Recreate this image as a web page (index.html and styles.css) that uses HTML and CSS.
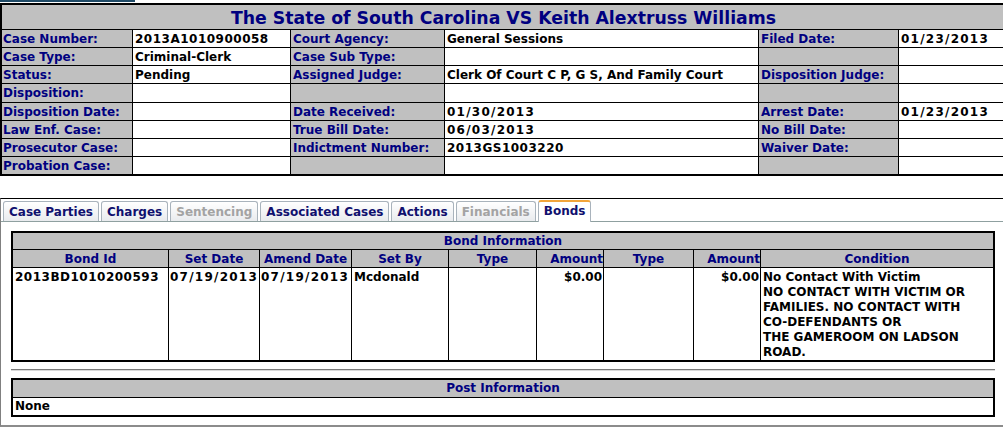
FILE: index.html
```html
<!DOCTYPE html>
<html>
<head>
<meta charset="utf-8">
<title>Case Details</title>
<link rel="stylesheet" href="styles.css">
</head>
<body>
<div class="topbar"></div>
<div class="case-head">
  <div class="title">The State of South Carolina VS Keith Alextruss Williams</div>

  <div class="lbl first">Case Number:</div><div class="val n">2013A1010900058</div>
  <div class="lbl">Court Agency:</div><div class="val">General Sessions</div>
  <div class="lbl">Filed Date:</div><div class="val d">01/23/2013</div>

  <div class="lbl first">Case Type:</div><div class="val">Criminal-Clerk</div>
  <div class="lbl">Case Sub Type:</div><div class="val"></div>
  <div class="lbl"></div><div class="val"></div>

  <div class="lbl first">Status:</div><div class="val">Pending</div>
  <div class="lbl">Assigned Judge:</div><div class="val">Clerk Of Court C P, G S, And Family Court</div>
  <div class="lbl">Disposition Judge:</div><div class="val"></div>

  <div class="lbl first">Disposition:</div><div class="val"></div>
  <div class="lbl"></div><div class="val"></div>
  <div class="lbl"></div><div class="val"></div>

  <div class="lbl first">Disposition Date:</div><div class="val"></div>
  <div class="lbl">Date Received:</div><div class="val d">01/30/2013</div>
  <div class="lbl">Arrest Date:</div><div class="val d">01/23/2013</div>

  <div class="lbl first">Law Enf. Case:</div><div class="val"></div>
  <div class="lbl">True Bill Date:</div><div class="val d">06/03/2013</div>
  <div class="lbl">No Bill Date:</div><div class="val"></div>

  <div class="lbl first">Prosecutor Case:</div><div class="val"></div>
  <div class="lbl">Indictment Number:</div><div class="val n">2013GS1003220</div>
  <div class="lbl">Waiver Date:</div><div class="val"></div>

  <div class="lbl first">Probation Case:</div><div class="val"></div>
  <div class="lbl"></div><div class="val"></div>
  <div class="lbl"></div><div class="val"></div>
</div>

<div class="tabpanel">
  <div class="tabs">
    <span class="tab">Case Parties</span>
    <span class="tab">Charges</span>
    <span class="tab disabled">Sentencing</span>
    <span class="tab">Associated Cases</span>
    <span class="tab">Actions</span>
    <span class="tab disabled">Financials</span>
    <span class="tab active">Bonds</span>
  </div>
  <div class="panel-body">
    <div class="bonds">
      <div class="hdr span-all">Bond Information</div>
      <div class="hdr col">Bond Id</div>
      <div class="hdr col">Set Date</div>
      <div class="hdr col">Amend Date</div>
      <div class="hdr col">Set By</div>
      <div class="hdr col">Type</div>
      <div class="hdr col right">Amount</div>
      <div class="hdr col">Type</div>
      <div class="hdr col right">Amount</div>
      <div class="hdr col">Condition</div>

      <div class="cell n">2013BD1010200593</div>
      <div class="cell d">07/19/2013</div>
      <div class="cell d">07/19/2013</div>
      <div class="cell">Mcdonald</div>
      <div class="cell"></div>
      <div class="cell right">$0.00</div>
      <div class="cell"></div>
      <div class="cell right">$0.00</div>
      <div class="cell">No Contact With Victim<br>NO CONTACT WITH VICTIM OR<br>FAMILIES. NO CONTACT WITH<br>CO-DEFENDANTS OR<br>THE GAMEROOM ON LADSON<br>ROAD.</div>
    </div>
    <div class="rule"></div>
    <div class="post">
      <div class="hdr">Post Information</div>
      <div class="cell">None</div>
    </div>
  </div>
</div>
</body>
</html>
```

FILE: styles.css
```css
html, body {
  margin: 0;
  padding: 0;
  overflow: hidden;
  background: #fff;
}
body {
  font-family: "DejaVu Sans", Verdana, sans-serif;
  font-weight: bold;
  font-size: 12px;
  color: #000;
}
.topbar {
  width: 135px;
  height: 2px;
  background: #1f4a66;
  margin-bottom: 1px;
}
.case-head {
  width: 1020px;
  border: 2px solid #000;
  border-right: none;
  background: #000;
  display: grid;
  grid-template-columns: 130px 157px 153px 313px 139px 1fr;
  grid-template-rows: 24px 17px 17px 17px 18px 17px 17px 17px 17px;
  gap: 1px;
}
.title {
  grid-column: 1 / -1;
  background: #c0c0c0;
  color: #000080;
  font-size: 17.3px;
  line-height: 24px;
  padding-top: 1px;
  text-align: center;
  padding-right: 17px;
  overflow: hidden;
}
.lbl, .val {
  line-height: 17px;
  padding-top: 1px;
  padding-left: 2px;
  white-space: nowrap;
  overflow: hidden;
}
.lbl { background: #c0c0c0; color: #000080; }
.lbl.first { padding-left: 1px; }
.val { background: #fff; color: #000; }
.n { letter-spacing: 0.5px; }
.d { letter-spacing: 1.25px; }

.tabpanel {
  width: 1010px;
  margin-top: 22px;
  border-top: 1px solid #000;
  border-left: 1px solid #808080;
  border-bottom: 2px solid #8c8c8c;
}
.tabs {
  display: flex;
  gap: 2px;
  padding: 2px 0 0 2px;
  border-bottom: 1px solid #8fa0a0;
  height: 20px;
}
.tab {
  height: 19px;
  line-height: 20px;
  padding: 0 5px;
  border: 1px solid #a9b3bc;
  border-bottom: none;
  border-radius: 3px 3px 0 0;
  background: linear-gradient(#ffffff, #e9ebee);
  color: #10106e;
}
.tab.disabled { color: #a3a3a3; }
.tab.active {
  background: #fff;
  border-top: 2px solid #f2a53a;
  height: 20px;
  margin-top: -1px;
  line-height: 19px;
}
.panel-body {
  padding: 9px 0 8px 10px;
}
.bonds, .post {
  width: 980px;
  border: 2px solid #000;
  background: #000;
  display: grid;
  gap: 1px;
}
.bonds {
  grid-template-columns: 155px 90px 91px 96px 87px 66px 89px 66px 232px;
  grid-template-rows: 16px 17px 92px;
}
.post {
  grid-template-columns: 1fr;
  grid-template-rows: 17px 17px;
}
.hdr {
  background: #c0c0c0;
  color: #000080;
  text-align: center;
  line-height: 17px;
  white-space: nowrap;
  overflow: hidden;
}
.hdr.col { padding-top: 1px; line-height: 16px; }
.bonds .hdr.span-all { grid-column: 1 / -1; line-height: 16px; }
.hdr.right, .cell.right { text-align: right; }
.cell {
  background: #fff;
  color: #000;
  line-height: 15px;
  padding: 2px 1px 0 2px;
  white-space: nowrap;
}
.cell.d { padding-left: 1px; }
.post .cell { line-height: 17px; padding: 0 2px; }
.rule {
  width: 984px;
  height: 0;
  border-top: 1px solid #7a7a7a;
  border-bottom: 1px solid #d8d8d8;
  margin: 7px 0 7px;
}
```
